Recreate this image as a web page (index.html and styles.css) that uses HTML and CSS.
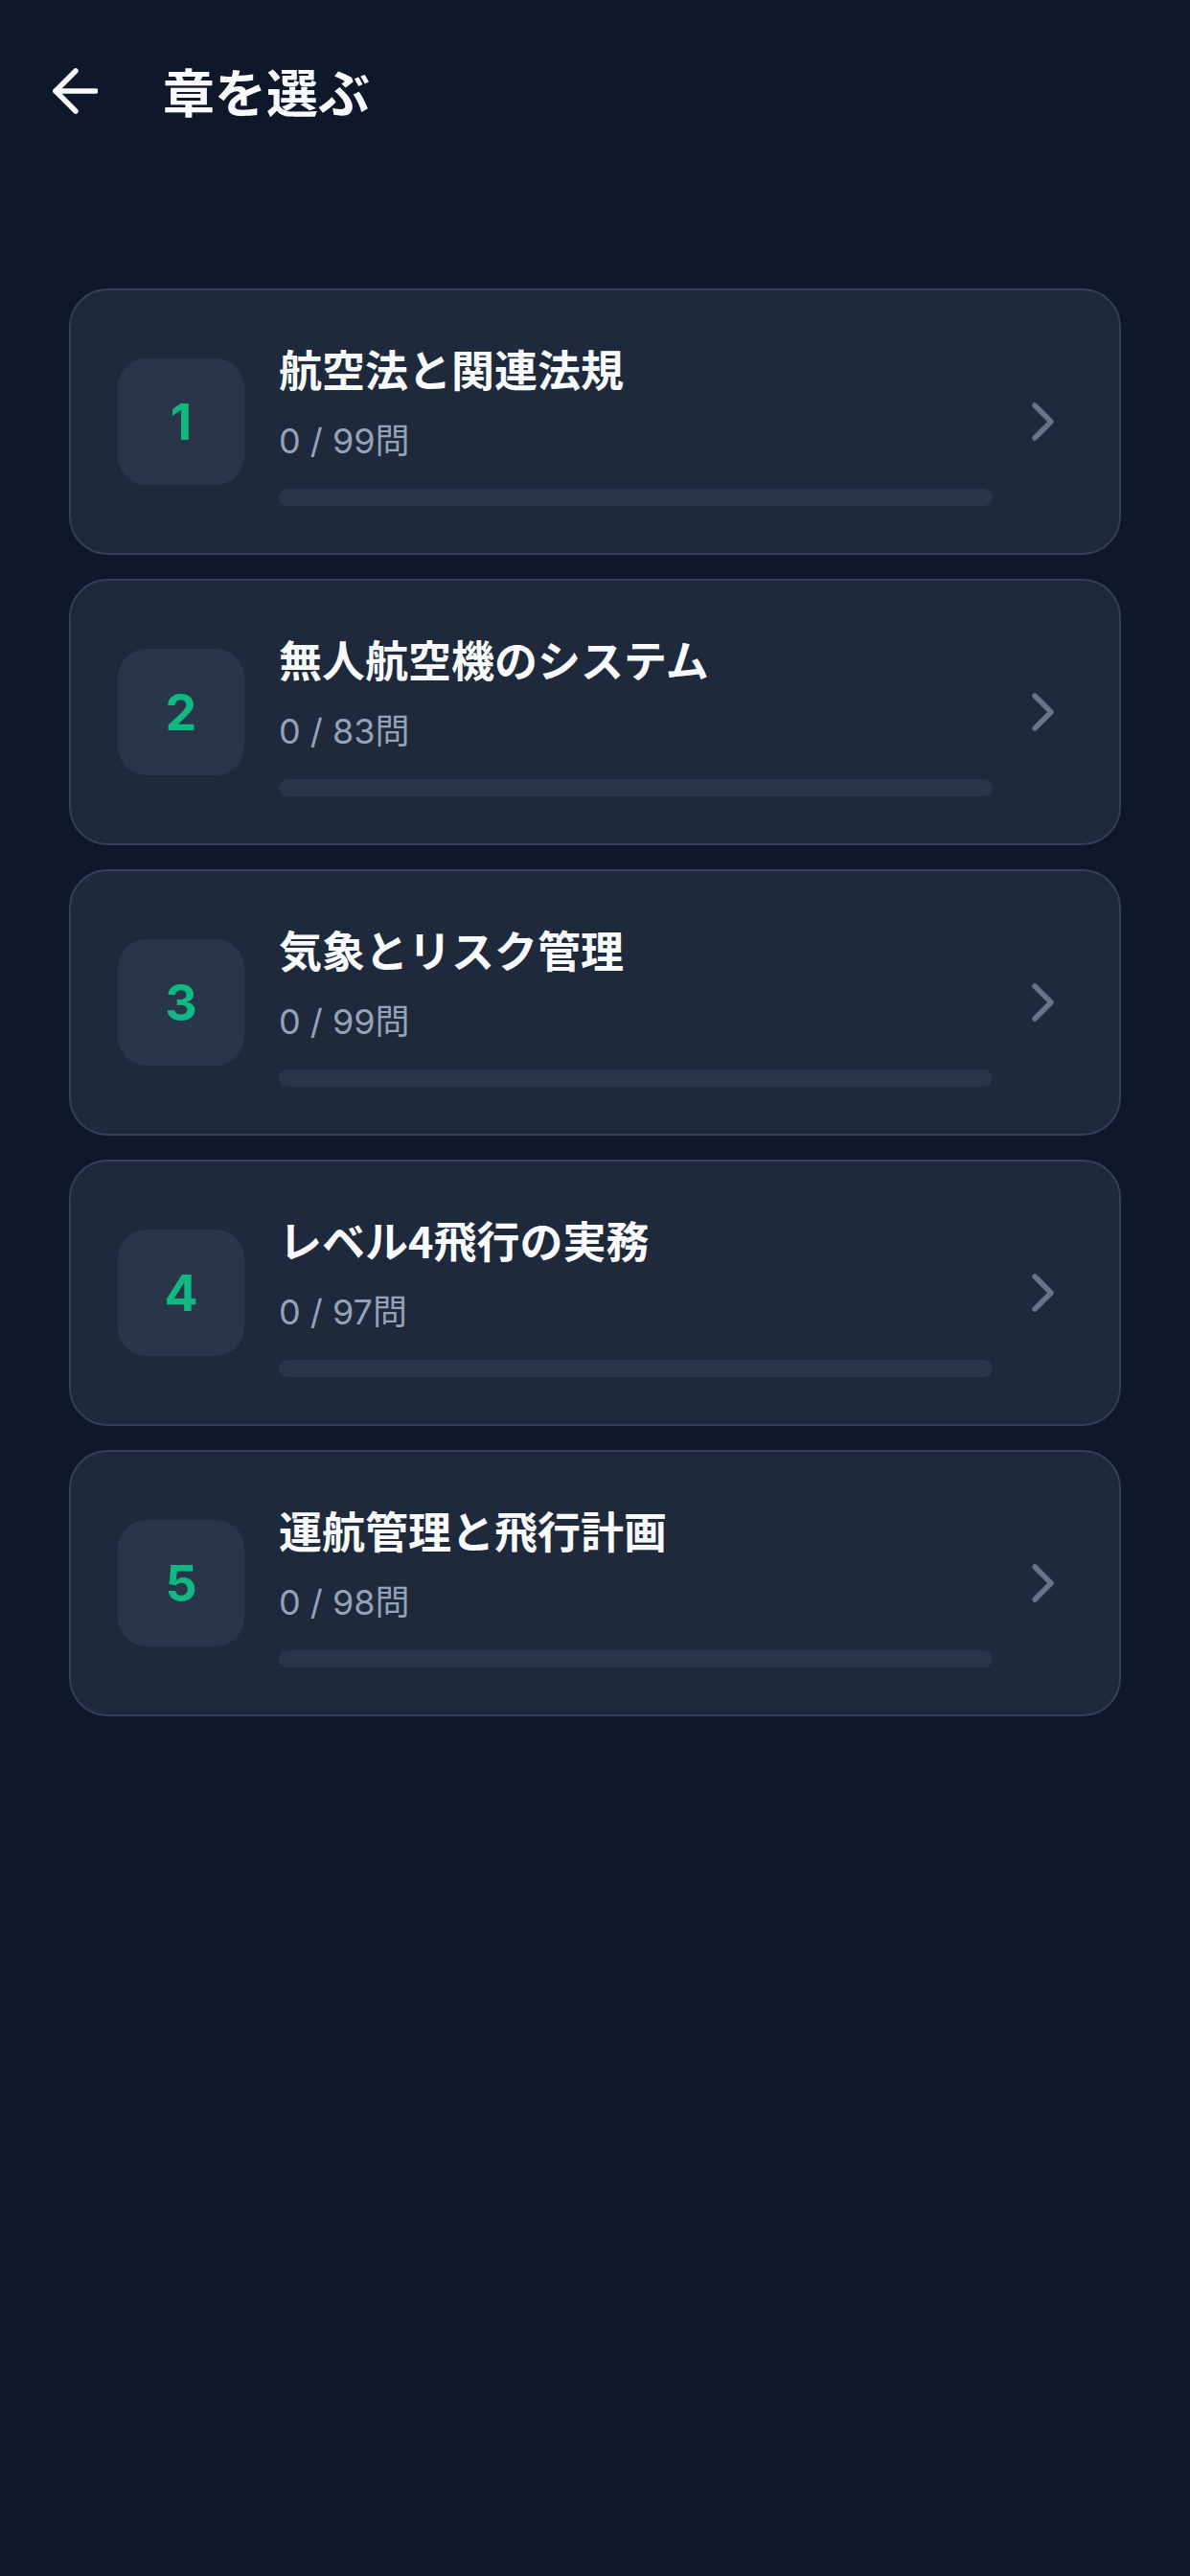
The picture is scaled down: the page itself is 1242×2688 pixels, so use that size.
FILE: index.html
```html
<!DOCTYPE html>
<html lang="ja">
<head>
    <meta charset="UTF-8">
    <meta name="viewport" content="width=device-width, initial-scale=1.0">
    <title>章を選ぶ</title>
    <link rel="stylesheet" href="styles.css">
</head>
<body>
    <header class="top-bar">
        <button class="back-btn" aria-label="戻る">
            <svg width="48" height="48" viewBox="0 0 48 48" fill="none" stroke="#f8fafc" stroke-width="5.5" stroke-linecap="round" stroke-linejoin="round">
                <path d="M46 24H4"/>
                <path d="M25 3L4 24L25 45"/>
            </svg>
        </button>
        <h1 class="page-title">章を選ぶ</h1>
    </header>

    <main class="chapter-list">
        <a class="chapter-card" href="#">
            <div class="chapter-num">1</div>
            <div class="chapter-info">
                <div class="chapter-title">航空法と関連法規</div>
                <div class="chapter-count">0 / 99問</div>
                <div class="progress"><div class="progress-fill" style="width: 0%"></div></div>
            </div>
            <svg class="chevron" width="24" height="40" viewBox="0 0 24 40" fill="none" stroke="#64748b" stroke-width="5.5" stroke-linecap="round" stroke-linejoin="round">
                <path d="M3 3L20 20L3 37"/>
            </svg>
        </a>

        <a class="chapter-card" href="#">
            <div class="chapter-num">2</div>
            <div class="chapter-info">
                <div class="chapter-title">無人航空機のシステム</div>
                <div class="chapter-count">0 / 83問</div>
                <div class="progress"><div class="progress-fill" style="width: 0%"></div></div>
            </div>
            <svg class="chevron" width="24" height="40" viewBox="0 0 24 40" fill="none" stroke="#64748b" stroke-width="5.5" stroke-linecap="round" stroke-linejoin="round">
                <path d="M3 3L20 20L3 37"/>
            </svg>
        </a>

        <a class="chapter-card" href="#">
            <div class="chapter-num">3</div>
            <div class="chapter-info">
                <div class="chapter-title">気象とリスク管理</div>
                <div class="chapter-count">0 / 99問</div>
                <div class="progress"><div class="progress-fill" style="width: 0%"></div></div>
            </div>
            <svg class="chevron" width="24" height="40" viewBox="0 0 24 40" fill="none" stroke="#64748b" stroke-width="5.5" stroke-linecap="round" stroke-linejoin="round">
                <path d="M3 3L20 20L3 37"/>
            </svg>
        </a>

        <a class="chapter-card" href="#">
            <div class="chapter-num">4</div>
            <div class="chapter-info">
                <div class="chapter-title">レベル4飛行の実務</div>
                <div class="chapter-count">0 / 97問</div>
                <div class="progress"><div class="progress-fill" style="width: 0%"></div></div>
            </div>
            <svg class="chevron" width="24" height="40" viewBox="0 0 24 40" fill="none" stroke="#64748b" stroke-width="5.5" stroke-linecap="round" stroke-linejoin="round">
                <path d="M3 3L20 20L3 37"/>
            </svg>
        </a>

        <a class="chapter-card" href="#">
            <div class="chapter-num">5</div>
            <div class="chapter-info">
                <div class="chapter-title">運航管理と飛行計画</div>
                <div class="chapter-count">0 / 98問</div>
                <div class="progress"><div class="progress-fill" style="width: 0%"></div></div>
            </div>
            <svg class="chevron" width="24" height="40" viewBox="0 0 24 40" fill="none" stroke="#64748b" stroke-width="5.5" stroke-linecap="round" stroke-linejoin="round">
                <path d="M3 3L20 20L3 37"/>
            </svg>
        </a>
    </main>
</body>
</html>
```

FILE: styles.css
```css
* {
    margin: 0;
    padding: 0;
    box-sizing: border-box;
}

body {
    font-family: Inter, "Noto Sans CJK JP", sans-serif;
    background: #0f172a;
    color: #f8fafc;
    min-height: 100vh;
}

.top-bar {
    display: flex;
    align-items: center;
    height: 190px;
    padding-left: 54px;
    gap: 68px;
}

.back-btn {
    display: flex;
    background: none;
    border: none;
    cursor: pointer;
}

.page-title {
    font-family: "Noto Sans CJK JP", sans-serif;
    font-size: 54px;
    font-weight: 700;
    line-height: 1;
}

.chapter-list {
    display: flex;
    flex-direction: column;
    gap: 25px;
    padding: 111px 72px 0;
}

.chapter-card {
    display: flex;
    align-items: center;
    height: 278px;
    padding: 0 67px 0 49px;
    background: #1e293b;
    border: 2px solid #334155;
    border-radius: 40px;
    text-decoration: none;
    color: inherit;
}

.chapter-num {
    flex: none;
    display: flex;
    justify-content: center;
    align-items: center;
    width: 132px;
    height: 132px;
    border-radius: 30px;
    background: #293548;
    color: #10b981;
    font-size: 52px;
    font-weight: 700;
}

.chapter-info {
    flex: 1;
    margin-left: 36px;
}

.chapter-title {
    font-family: "Noto Sans CJK JP", sans-serif;
    font-size: 45px;
    font-weight: 700;
    line-height: 66px;
}

.chapter-count {
    margin-top: 19px;
    font-size: 36px;
    line-height: 46px;
    color: #94a3b8;
}

.progress {
    margin-top: 27px;
    height: 18px;
    border-radius: 9px;
    background: #293548;
    overflow: hidden;
}

.progress-fill {
    height: 100%;
    background: #10b981;
}

.chevron {
    flex: none;
    margin-left: 41px;
}
```
